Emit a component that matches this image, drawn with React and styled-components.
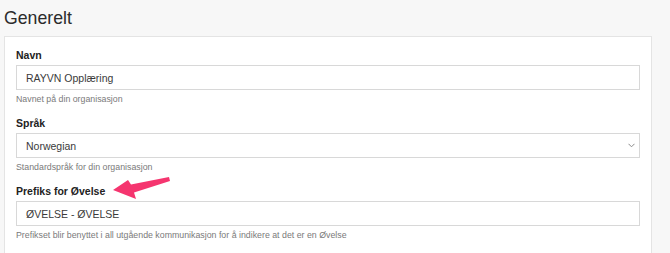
import React from "react";
import styled, { createGlobalStyle } from "styled-components";

const GlobalStyle = createGlobalStyle`
    body {
        margin: 0;
        background: #f7f7f7;
        font-family: "Liberation Sans", Arial, sans-serif;
        color: #333;
    }
`;

const Page = styled.div`
    position: relative;
    width: 670px;
    height: 253px;
    overflow: hidden;
`;

const Title = styled.h1`
    margin: 0;
    padding: 1px 0 0 4px;
    height: 35px;
    line-height: 35px;
    font-size: 17.7px;
    font-weight: normal;
    color: #2b2b2b;
`;

const Card = styled.div`
    margin-left: 4px;
    width: 648px;
    box-sizing: border-box;
    min-height: 230px;
    background: #fff;
    border: 1px solid #e4e4e4;
    padding: 9px 11px 0 11px;
`;

const Group = styled.div`
    margin-bottom: 9px;
`;

const Label = styled.label`
    display: block;
    font-size: 10.5px;
    font-weight: bold;
    line-height: 18px;
    color: #222;
    margin-bottom: 1px;
`;

const Field = styled.div`
    position: relative;
    display: flex;
    align-items: center;
    height: 25px;
    box-sizing: border-box;
    border: 1px solid #d8d8d8;
    padding: 0 9px;
    font-size: 10.5px;
    color: #3a3a3a;
`;

const Chevron = styled.svg`
    margin-left: auto;
    margin-right: -5px;
`;

const Help = styled.div`
    margin-top: 3px;
    font-size: 8.8px;
    line-height: 12px;
    color: #7a7a7a;
`;

const Arrow = styled.svg`
    position: absolute;
    left: 0;
    top: 0;
    pointer-events: none;
`;

const fields = [
    { label: "Navn", value: "RAYVN Opplæring", help: "Navnet på din organisasjon" },
    { label: "Språk", value: "Norwegian", help: "Standardspråk for din organisasjon", select: true },
    {
        label: "Prefiks for Øvelse",
        value: "ØVELSE - ØVELSE",
        help: "Prefikset blir benyttet i all utgående kommunikasjon for å indikere at det er en Øvelse",
    },
];

export default function App() {
    return (
        <>
            <GlobalStyle />
            <Page>
                <Title>Generelt</Title>
                <Card>
                    {fields.map((f) => (
                        <Group key={f.label}>
                            <Label>{f.label}</Label>
                            <Field>
                                {f.value}
                                {f.select && (
                                    <Chevron width="7" height="5" viewBox="0 0 7 5">
                                        <path d="M0.5 0.8 L3.5 3.8 L6.5 0.8" fill="none" stroke="#8a8a8a" strokeWidth="1" />
                                    </Chevron>
                                )}
                            </Field>
                            <Help>{f.help}</Help>
                        </Group>
                    ))}
                </Card>
                <Arrow width="670" height="253" viewBox="0 0 670 253">
                    <polygon
                        points="113,190 128,180 131,184.5 169,177 170,181 134,192.5 136,199"
                        fill="#f5356f"
                    />
                </Arrow>
            </Page>
        </>
    );
}
